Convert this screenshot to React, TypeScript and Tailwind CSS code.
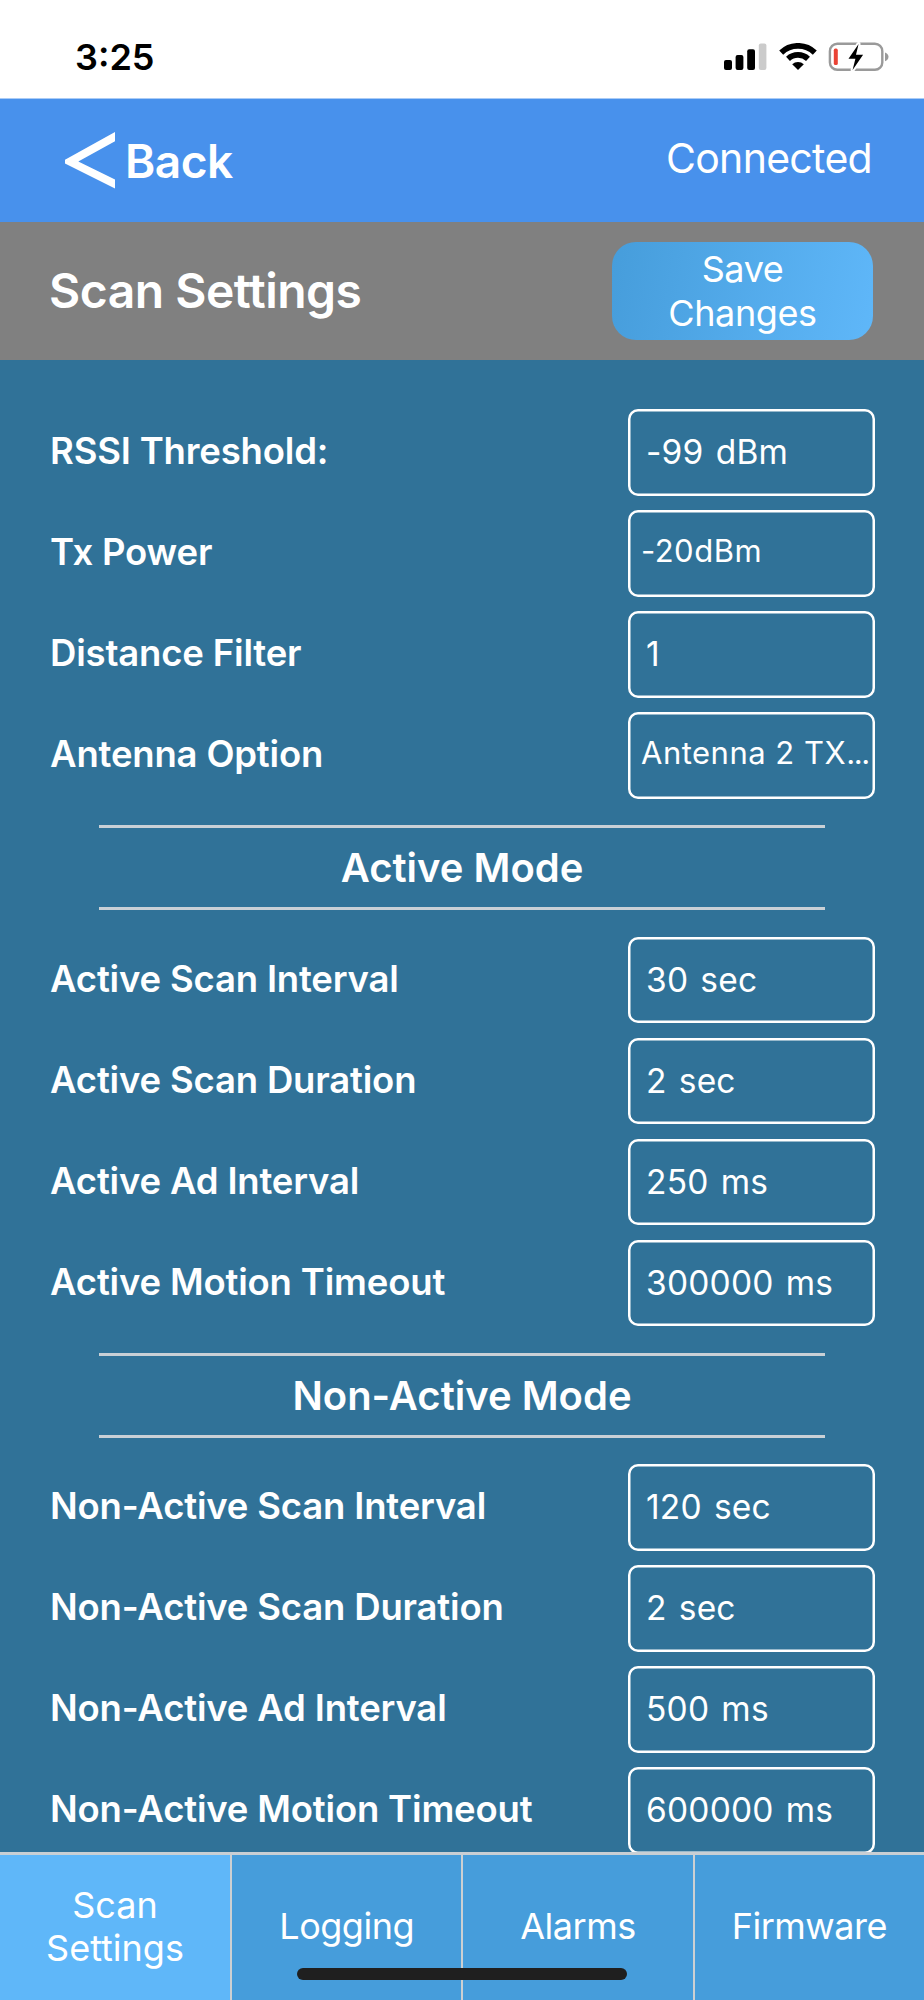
import { clsx } from "clsx";

type Setting = {
  label: string;
  value: string;
  select?: boolean;
  truncated?: boolean;
};

const general: Setting[] = [
  { label: "RSSI Threshold:", value: "-99 dBm" },
  { label: "Tx Power", value: "-20dBm", select: true },
  { label: "Distance Filter", value: "1" },
  { label: "Antenna Option", value: "Antenna 2 TX", select: true, truncated: true },
];

const active: Setting[] = [
  { label: "Active Scan Interval", value: "30 sec" },
  { label: "Active Scan Duration", value: "2 sec" },
  { label: "Active Ad Interval", value: "250 ms" },
  { label: "Active Motion Timeout", value: "300000 ms" },
];

const nonActive: Setting[] = [
  { label: "Non-Active Scan Interval", value: "120 sec" },
  { label: "Non-Active Scan Duration", value: "2 sec" },
  { label: "Non-Active Ad Interval", value: "500 ms" },
  { label: "Non-Active Motion Timeout", value: "600000 ms" },
];

const tabs = ["Scan Settings", "Logging", "Alarms", "Firmware"];

function SignalIcon() {
  return (
    <svg width="43" height="28" viewBox="0 0 43 28">
      <rect x="0" y="17" width="8" height="10" rx="2" />
      <rect x="11.6" y="12" width="7.8" height="15" rx="2" />
      <rect x="23.2" y="6.2" width="7.8" height="20.8" rx="2" />
      <rect x="34.8" y="0.6" width="7.6" height="26.4" rx="2" fill="#cbcbcb" />
    </svg>
  );
}

function WifiIcon() {
  return (
    <svg width="38" height="28" viewBox="0 0 38 28">
      <g fill="none" stroke="#000" strokeWidth="5.7">
        <path d="M2.2 9.6a24.2 24.2 0 0 1 33.6 0" />
        <path d="M9 15.8a14.8 14.8 0 0 1 20 0" />
      </g>
      <path d="M19 27.1l-5.8-5.9a8.4 8.4 0 0 1 11.6 0z" />
    </svg>
  );
}

function BatteryIcon() {
  return (
    <svg width="61" height="32" viewBox="0 0 61 32">
      <rect
        x="1.9"
        y="2.8"
        width="52.4"
        height="26"
        rx="7.4"
        fill="none"
        stroke="#9a9a9a"
        strokeWidth="2.4"
      />
      <path d="M57 11.4c2.2.6 3.5 2.4 3.5 4.4s-1.3 3.8-3.5 4.4z" fill="#9a9a9a" />
      <rect x="5.8" y="7.6" width="4" height="16.4" rx="1.6" fill="#ea4335" />
      <path
        d="M30.6 3L20.5 17.8h6.9l-2.8 11.2L35.1 13.8H28z"
        stroke="#fff"
        strokeWidth="4"
        strokeLinejoin="round"
      />
      <path d="M30.6 3L20.5 17.8h6.9l-2.8 11.2L35.1 13.8H28z" />
    </svg>
  );
}

function SettingRow({ label, value, select, truncated }: Setting) {
  return (
    <div className="flex h-[101px] items-start justify-between pr-[49px] pl-[50px]">
      <span className="flex h-[85.5px] items-center text-[36.5px] font-semibold tracking-[-0.18px]">
        {label}
      </span>

      <div
        className={clsx(
          "flex h-[86.5px] w-[247px] items-center whitespace-nowrap rounded-[10px] shadow-[inset_0_0_0_2.5px_#fff]",
          select
            ? "pb-1 pl-[13px] text-[31px] tracking-[0.5px]"
            : "pl-[18px] text-[33.5px] tracking-[0.2px] [word-spacing:2.5px]"
        )}
      >
        {value}
        {truncated && <span className="tracking-[-1.4px]">...</span>}
      </div>
    </div>
  );
}

function SectionTitle({ children }: { children: string }) {
  return (
    <div className="mx-[99px] mt-3 mb-[26.5px] flex h-[85px] items-center justify-center border-y-[3px] border-[#c9d0d6] pt-px text-[40px] font-semibold">
      {children}
    </div>
  );
}

export default function App() {
  return (
    <div className="relative flex h-[2000px] w-[924px] flex-col overflow-hidden bg-[#307298] font-[Inter,'Liberation_Sans',sans-serif] text-white">
      {/* Status bar */}

      <div className="flex h-[98px] shrink-0 items-center justify-between bg-white pt-4 pr-[35px] pl-[75px] text-black">
        <span className="text-[36px] font-semibold">3:25</span>

        <div className="flex items-center">
          <SignalIcon />
          <div className="w-3" />
          <WifiIcon />
          <div className="w-[11px]" />
          <BatteryIcon />
        </div>
      </div>

      {/* Navigation */}

      <header className="flex h-[124px] shrink-0 items-center justify-between border-t border-[#a9cbf6] bg-[#4891ec] pr-[52px] pl-[65px]">
        <div className="flex items-center">
          <svg width="50" height="57" viewBox="0 0 50 57" fill="#fff">
            <path d="M50 0v9.3L13.3 29.5 50 47.6v9L0 31.4v-3.6z" />
          </svg>
          <span className="ml-[10px] pt-px text-[46px] font-semibold tracking-[-0.5px]">
            Back
          </span>
        </div>

        <span className="pb-[3px] text-[41px] tracking-[-0.7px]">Connected</span>
      </header>

      {/* Page title */}

      <div className="flex h-[138px] shrink-0 items-center justify-between bg-[#808080] pr-[51px] pl-[49px]">
        <h1 className="text-[48px] font-semibold tracking-[-0.5px]">
          Scan Settings
        </h1>

        <button className="h-[98px] w-[261px] rounded-[24px] bg-linear-100 from-[#469ddb] to-[#5fb7f9] px-10 pt-px text-[36px] leading-[43.5px] tracking-[-0.4px]">
          Save Changes
        </button>
      </div>

      {/* Settings list */}

      <main className="min-h-0 flex-1 overflow-hidden pt-[49px]">
        {general.map((item) => (
          <SettingRow key={item.label} {...item} />
        ))}

        <SectionTitle>Active Mode</SectionTitle>

        {active.map((item) => (
          <SettingRow key={item.label} {...item} />
        ))}

        <SectionTitle>Non-Active Mode</SectionTitle>

        {nonActive.map((item) => (
          <SettingRow key={item.label} {...item} />
        ))}
      </main>

      {/* Tabs */}

      <nav className="flex h-[148px] shrink-0 border-t-[3px] border-[#c9cfd4]">
        {tabs.map((tab, index) => (
          <button
            key={tab}
            className={clsx(
              "flex items-center justify-center pb-px text-[36px] leading-[43.5px]",
              index === 0
                ? "w-[232px] bg-[#5fb7f9] px-8"
                : "flex-1 bg-[#469ddb] tracking-[-0.5px]",
              index < 3 && "border-r-2 border-[#cdd0d2]"
            )}
          >
            {tab}
          </button>
        ))}
      </nav>

      {/* Home indicator */}

      <div className="absolute bottom-5 left-[297px] h-3 w-[330px] rounded-full bg-[#1f1f1f]" />
    </div>
  );
}
